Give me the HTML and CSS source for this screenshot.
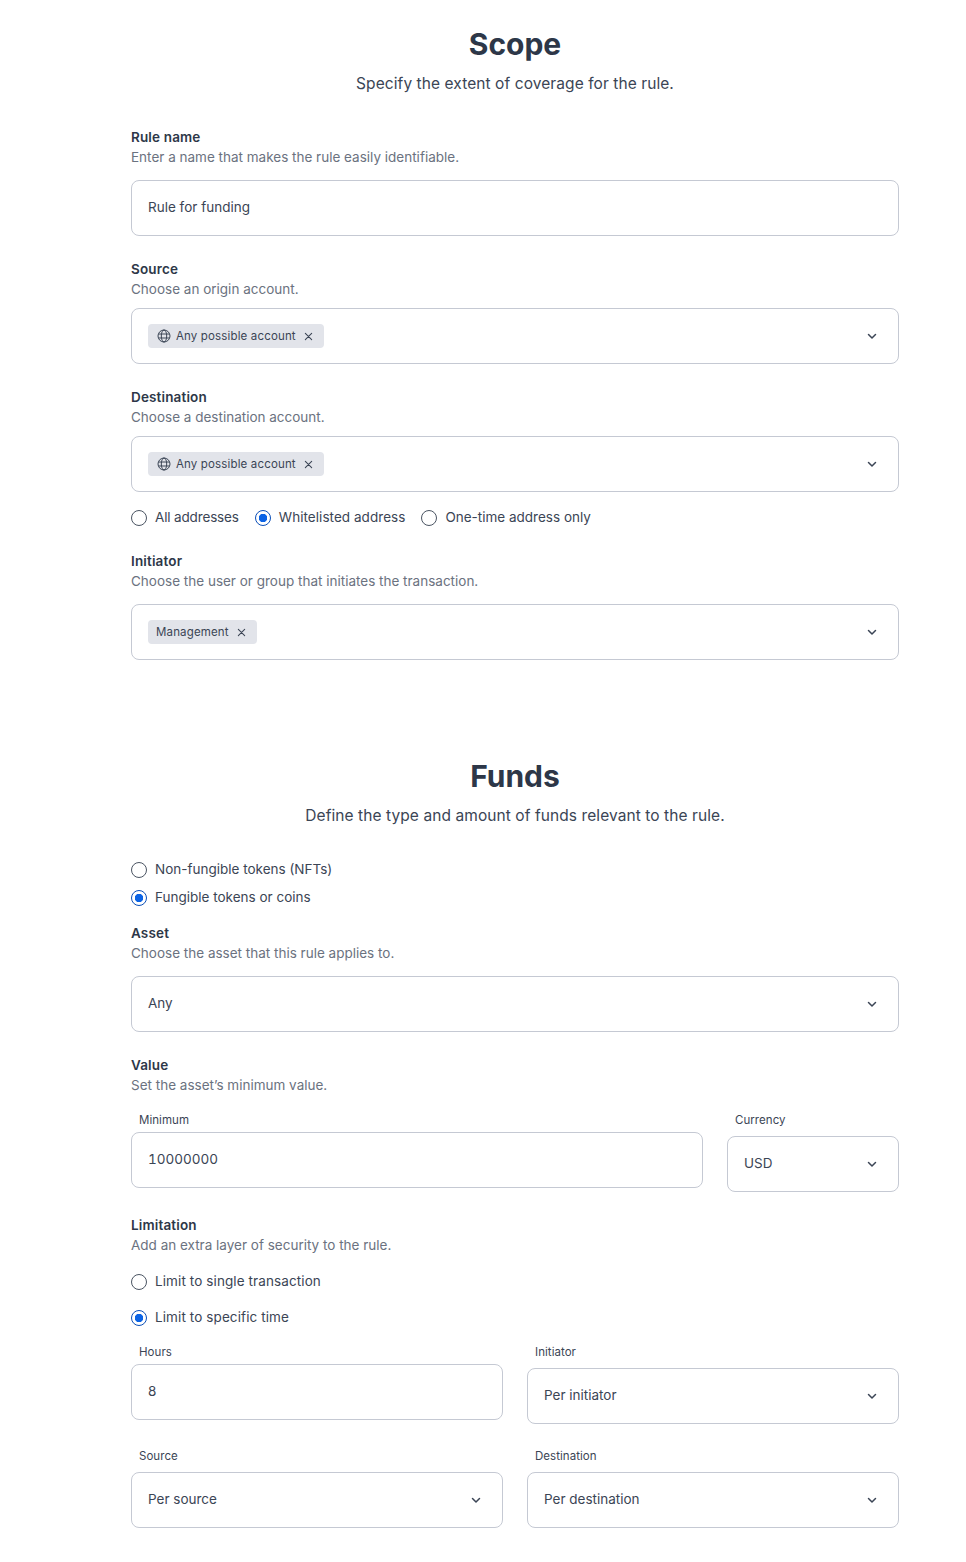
FILE: index.html
```html
<!DOCTYPE html>
<html lang="en">
<head>
    <meta charset="UTF-8">
    <meta name="viewport" content="width=device-width, initial-scale=1.0">
    <title>Rule</title>
    <link rel="stylesheet" href="styles.css">
</head>
<body>
    <svg class="defs" width="0" height="0">
        <symbol id="chevron" viewBox="0 0 12 12"><path d="M2.500 4.500l3.500 3.500 3.500-3.500" fill="none" stroke="currentColor" stroke-width="1.5" stroke-linecap="round" stroke-linejoin="round"/></symbol>
        <symbol id="close" viewBox="0 0 10 10"><path d="M1.500 1.500l7 7M8.500 1.500l-7 7" fill="none" stroke="currentColor" stroke-width="1.200" stroke-linecap="round"/></symbol>
        <symbol id="globe" viewBox="0 0 14 14"><g fill="none" stroke="currentColor" stroke-width="1"><circle cx="7" cy="7" r="6"/><ellipse cx="7" cy="7" rx="2.700" ry="6"/><path d="M1.500 5h11M1.500 9h11"/></g></symbol>
    </svg>
    <main class="container">
        <h1 class="title">Scope</h1>
        <p class="subtitle">Specify the extent of coverage for the rule.</p>

        <div class="field-head first">
            <p class="label">Rule name</p>
            <p class="hint">Enter a name that makes the rule easily identifiable.</p>
        </div>
        <input type="text" class="box input gap-13" value="Rule for funding">

        <div class="field-head">
            <p class="label">Source</p>
            <p class="hint">Choose an origin account.</p>
        </div>
        <div class="box select gap-9">
            <span class="tag"><svg class="globe"><use href="#globe"/></svg>Any possible account<svg class="close"><use href="#close"/></svg></span>
            <svg class="chevron"><use href="#chevron"/></svg>
        </div>

        <div class="field-head">
            <p class="label">Destination</p>
            <p class="hint">Choose a destination account.</p>
        </div>
        <div class="box select gap-9">
            <span class="tag"><svg class="globe"><use href="#globe"/></svg>Any possible account<svg class="close"><use href="#close"/></svg></span>
            <svg class="chevron"><use href="#chevron"/></svg>
        </div>

        <div class="radio-row gap-13">
            <label class="radio tight"><input type="radio" name="address">All addresses</label>
            <label class="radio wide"><input type="radio" name="address" checked>Whitelisted address</label>
            <label class="radio"><input type="radio" name="address">One-time address only</label>
        </div>

        <div class="field-head after-radio">
            <p class="label">Initiator</p>
            <p class="hint">Choose the user or group that initiates the transaction.</p>
        </div>
        <div class="box select gap-13">
            <span class="tag">Management<svg class="close"><use href="#close"/></svg></span>
            <svg class="chevron"><use href="#chevron"/></svg>
        </div>

        <h1 class="title funds">Funds</h1>
        <p class="subtitle">Define the type and amount of funds relevant to the rule.</p>

        <div class="radio-stack">
            <label class="radio"><input type="radio" name="kind">Non-fungible tokens (NFTs)</label>
            <label class="radio"><input type="radio" name="kind" checked>Fungible tokens or coins</label>
        </div>

        <div class="field-head after-stack">
            <p class="label">Asset</p>
            <p class="hint">Choose the asset that this rule applies to.</p>
        </div>
        <div class="box select gap-13">
            <span class="value">Any</span>
            <svg class="chevron"><use href="#chevron"/></svg>
        </div>

        <div class="field-head">
            <p class="label">Value</p>
            <p class="hint">Set the asset’s minimum value.</p>
        </div>
        <div class="row row-value">
            <div>
                <p class="small-label">Minimum</p>
                <input type="text" class="box input number gap-4" value="10000000">
            </div>
            <div>
                <p class="small-label">Currency</p>
                <div class="box select gap-8">
                    <span class="value">USD</span>
                    <svg class="chevron"><use href="#chevron"/></svg>
                </div>
            </div>
        </div>

        <div class="field-head">
            <p class="label">Limitation</p>
            <p class="hint">Add an extra layer of security to the rule.</p>
        </div>
        <div class="radio-limit">
            <label class="radio"><input type="radio" name="limit">Limit to single transaction</label>
            <label class="radio"><input type="radio" name="limit" checked>Limit to specific time</label>
        </div>
        <div class="row row-half">
            <div>
                <p class="small-label">Hours</p>
                <input type="text" class="box input gap-4" value="8">
            </div>
            <div>
                <p class="small-label">Initiator</p>
                <div class="box select gap-8">
                    <span class="value">Per initiator</span>
                    <svg class="chevron"><use href="#chevron"/></svg>
                </div>
            </div>
            <div>
                <p class="small-label">Source</p>
                <div class="box select gap-8">
                    <span class="value">Per source</span>
                    <svg class="chevron"><use href="#chevron"/></svg>
                </div>
            </div>
            <div>
                <p class="small-label">Destination</p>
                <div class="box select gap-8">
                    <span class="value">Per destination</span>
                    <svg class="chevron"><use href="#chevron"/></svg>
                </div>
            </div>
        </div>
    </main>
</body>
</html>
```

FILE: styles.css
```css
* {
    box-sizing: border-box;
}
body {
    margin: 0;
    height: 1562px;
    background-color: #fff;
    color: #3b4555;
    font-family: Inter, "Liberation Sans", sans-serif;
    overflow: hidden;
}
p, h1 {
    margin: 0;
}
.defs {
    position: absolute;
}
.container {
    width: 768px;
    margin-left: 131px;
    padding-top: 24px;
}
.title {
    color: #2d3748;
    font-size: 30px;
    font-weight: 700;
    line-height: 40px;
    text-align: center;
}
.title.funds {
    margin-top: 96px;
}
.subtitle {
    margin-top: 8px;
    font-size: 15.500px;
    letter-spacing: .08px;
    line-height: 24px;
    text-align: center;
}
.field-head {
    margin-top: 23px;
}
.field-head.first {
    margin-top: 31px;
}
.field-head.after-radio {
    margin-top: 22px;
}
.field-head.after-stack {
    margin-top: 14px;
}
.label {
    color: #2d3748;
    font-size: 13.500px;
    font-weight: 600;
    letter-spacing: .15px;
    line-height: 20px;
}
.hint {
    color: #6b7280;
    font-size: 13.500px;
    line-height: 20px;
}
.small-label {
    padding-left: 8px;
    font-size: 11.500px;
    letter-spacing: .05px;
    line-height: 16px;
}
.box {
    display: flex;
    align-items: center;
    justify-content: space-between;
    width: 100%;
    height: 56px;
    padding: 0 16px;
    border: 1px solid #c5c9d3;
    border-radius: 8px;
    background-color: #fff;
    color: #3b4555;
    font-family: inherit;
    font-size: 13.500px;
}
.input {
    padding-bottom: 2px;
}
.input.number {
    font-feature-settings: "tnum";
}
.value {
    margin-bottom: 2px;
}
.gap-4 { margin-top: 4px; }
.gap-8 { margin-top: 8px; }
.gap-9 { margin-top: 9px; }
.gap-13 { margin-top: 13px; }
.tag {
    display: inline-flex;
    align-items: center;
    height: 24px;
    padding: 0 8px;
    border-radius: 4px;
    background-color: #e2e4ea;
    font-size: 11.500px;
    letter-spacing: .15px;
}
.globe {
    width: 14px;
    height: 14px;
    margin-right: 5px;
    margin-left: 1px;
}
.close {
    width: 9px;
    height: 9px;
    margin-left: 8px;
    margin-right: 3px;
}
.chevron {
    flex: none;
    width: 12px;
    height: 12px;
    margin-right: 4px;
}
.radio-row {
    display: flex;
    gap: 16px;
}
.radio {
    display: flex;
    align-items: center;
    height: 24px;
    font-size: 13.500px;
}
.radio.tight {
    letter-spacing: -.15px;
}
.radio.wide {
    letter-spacing: .05px;
}
.radio input {
    appearance: none;
    flex: none;
    width: 16px;
    height: 16px;
    margin: 1px 8px 0 0;
    border: 1px solid #4b5563;
    border-radius: 50%;
    background-color: #fff;
}
.radio input:checked {
    border-color: #0b4fb8;
    background: radial-gradient(circle, #0b63e5 0 4px, #fff 4.500px);
}
.radio-stack {
    display: flex;
    flex-direction: column;
    gap: 4px;
    margin-top: 29px;
}
.radio-limit {
    display: flex;
    flex-direction: column;
    gap: 12px;
    margin-top: 14px;
    letter-spacing: .1px;
}
.row {
    display: grid;
    column-gap: 24px;
    align-items: start;
}
.row-value {
    grid-template-columns: 572px 172px;
    margin-top: 17px;
}
.row-half {
    grid-template-columns: 372px 372px;
    row-gap: 24px;
    margin-top: 15px;
}
```
